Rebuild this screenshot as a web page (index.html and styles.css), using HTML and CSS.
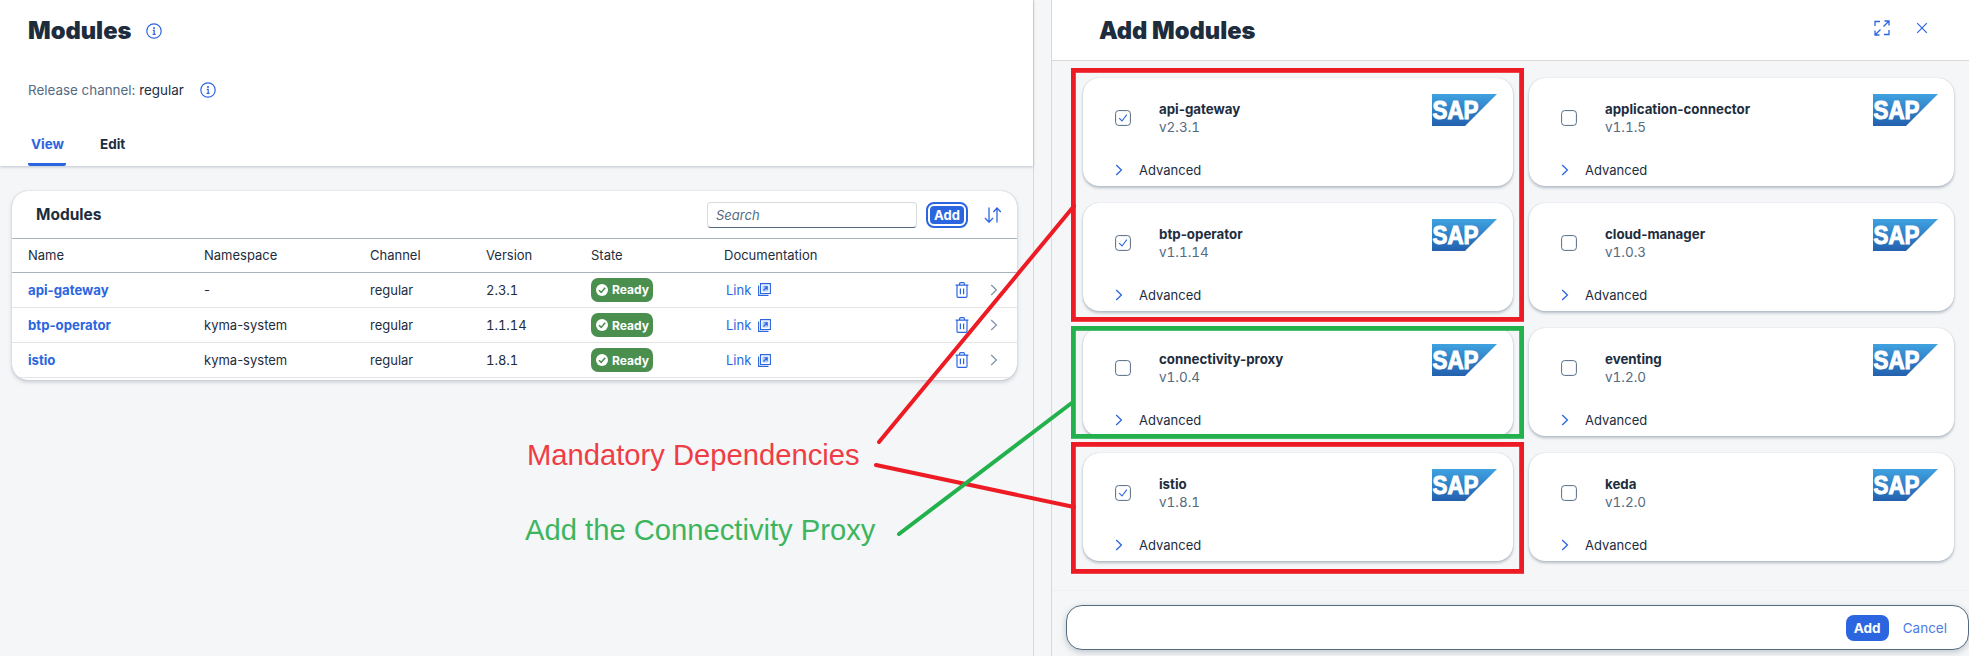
FILE: index.html
```html
<!DOCTYPE html>
<html lang="en">
<head>
<meta charset="utf-8">
<title>Modules</title>
<link rel="stylesheet" href="styles.css">
</head>
<body>
<svg class="defs" width="0" height="0" aria-hidden="true">
  <defs>
    <linearGradient id="sapg" x1="0" y1="0" x2="0" y2="1">
      <stop offset="0" stop-color="#3fa2e0"/>
      <stop offset="1" stop-color="#2360ae"/>
    </linearGradient>
    <symbol id="i-info" viewBox="0 0 16 16">
      <circle cx="8" cy="8" r="7.2" fill="none" stroke="currentColor" stroke-width="1.2"/>
      <circle cx="8" cy="5" r="1" fill="currentColor"/>
      <path d="M6.8 7.4H8.2V11.4M6.6 11.4H9.6" fill="none" stroke="currentColor" stroke-width="1.2"/>
    </symbol>
    <symbol id="i-ext" viewBox="0 0 13 13">
      <path d="M2.5.6H12.4V10.5H2.5Z M.6 2.5V12.4H10.5" fill="none" stroke="currentColor" stroke-width="1.1"/>
      <path d="M4.4 2.6H10.4V8.6H4.4Z" fill="currentColor" opacity=".35"/>
      <path d="M5.5 7.5L9 4M6.3 3.8H9.2V6.7" fill="none" stroke="currentColor" stroke-width="1.1"/>
    </symbol>
    <symbol id="i-trash" viewBox="0 0 14 16">
      <path d="M.6 3.2H13.4M2 3.2V14.2Q2 15.3 3.1 15.3H10.9Q12 15.3 12 14.2V3.2M4.6 3.2V1.8Q4.6.7 5.7.7H8.3Q9.4.7 9.4 1.8V3.2M5.4 6.4V12.2M8.6 6.4V12.2" fill="none" stroke="currentColor" stroke-width="1.2"/>
    </symbol>
    <symbol id="i-chev" viewBox="0 0 8 12">
      <path d="M1.2 1L6.4 6L1.2 11" fill="none" stroke="currentColor" stroke-width="1.3"/>
    </symbol>
    <symbol id="i-sort" viewBox="0 0 18 16">
      <path d="M5 .6V15M1 11L5 15.2L9 11M13 15.4V1M9.4 5L13 1L16.8 5" fill="none" stroke="currentColor" stroke-width="1.3"/>
    </symbol>
    <symbol id="i-expand" viewBox="0 0 16 16">
      <path d="M1 6V1.5H6M15 10V14.5H10M9.5 6.5L15 1M10.5 1H15V5.5M1 15L6.5 9.5M1 10.5V15H5.5" fill="none" stroke="currentColor" stroke-width="1.3"/>
    </symbol>
    <symbol id="i-close" viewBox="0 0 12 12">
      <path d="M1.2 1.2L10.8 10.8M10.8 1.2L1.2 10.8" fill="none" stroke="currentColor" stroke-width="1.2"/>
    </symbol>
    <symbol id="i-check" viewBox="0 0 16 16">
      <rect x=".6" y=".6" width="14.8" height="14.8" rx="3" fill="#fff" stroke="#556b82" stroke-width="1"/>
    </symbol>
    <symbol id="i-logo" viewBox="0 0 65 32">
      <polygon points="0,0 65,0 33,32 0,32" fill="url(#sapg)"/>
      <text x="0.5" y="25" class="logo-text" textLength="46" lengthAdjust="spacingAndGlyphs">SAP</text>
    </symbol>
  </defs>
</svg>

<div class="page">
  <main class="left">
    <header class="page-head">
      <div class="title-row">
        <h1 class="title">Modules</h1>
        <svg class="icon-16 blue"><use href="#i-info"/></svg>
      </div>
      <div class="channel-row">
        <span class="muted">Release channel:</span>&nbsp;<span>regular</span>
        <svg class="icon-16 blue channel-info"><use href="#i-info"/></svg>
      </div>
      <nav class="tabs">
        <span class="tab active">View</span>
        <span class="tab">Edit</span>
      </nav>
    </header>

    <section class="card">
      <div class="toolbar">
        <h2 class="card-title">Modules</h2>
        <div class="search">Search</div>
        <button class="btn-focus">Add</button>
        <svg class="sort blue"><use href="#i-sort"/></svg>
      </div>
      <table class="table">
        <thead>
          <tr>
            <th class="c-name">Name</th>
            <th class="c-ns">Namespace</th>
            <th class="c-ch">Channel</th>
            <th class="c-ver">Version</th>
            <th class="c-state">State</th>
            <th class="c-doc">Documentation</th>
            <th></th>
          </tr>
        </thead>
        <tbody>
          <tr>
            <td><a class="name-link">api-gateway</a></td><td>-</td><td>regular</td><td class="num">2.3.1</td>
            <td><span class="badge"><span class="badge-dot"><svg class="badge-tick" viewBox="0 0 12 12"><path d="M3 6.2L5.2 8.4L9.2 3.8"/></svg></span>Ready</span></td>
            <td><a class="doc-link">Link<svg class="icon-13"><use href="#i-ext"/></svg></a></td>
            <td class="actions"><svg class="icon-trash blue"><use href="#i-trash"/></svg><svg class="icon-chev gray"><use href="#i-chev"/></svg></td>
          </tr>
          <tr>
            <td><a class="name-link">btp-operator</a></td><td>kyma-system</td><td>regular</td><td class="num">1.1.14</td>
            <td><span class="badge"><span class="badge-dot"><svg class="badge-tick" viewBox="0 0 12 12"><path d="M3 6.2L5.2 8.4L9.2 3.8"/></svg></span>Ready</span></td>
            <td><a class="doc-link">Link<svg class="icon-13"><use href="#i-ext"/></svg></a></td>
            <td class="actions"><svg class="icon-trash blue"><use href="#i-trash"/></svg><svg class="icon-chev gray"><use href="#i-chev"/></svg></td>
          </tr>
          <tr>
            <td><a class="name-link">istio</a></td><td>kyma-system</td><td>regular</td><td class="num">1.8.1</td>
            <td><span class="badge"><span class="badge-dot"><svg class="badge-tick" viewBox="0 0 12 12"><path d="M3 6.2L5.2 8.4L9.2 3.8"/></svg></span>Ready</span></td>
            <td><a class="doc-link">Link<svg class="icon-13"><use href="#i-ext"/></svg></a></td>
            <td class="actions"><svg class="icon-trash blue"><use href="#i-trash"/></svg><svg class="icon-chev gray"><use href="#i-chev"/></svg></td>
          </tr>
        </tbody>
      </table>
    </section>
  </main>

  <aside class="right">
    <header class="drawer-head">
      <h1 class="title">Add Modules</h1>
      <div class="drawer-actions">
        <svg class="icon-16 blue"><use href="#i-expand"/></svg>
        <svg class="icon-close blue"><use href="#i-close"/></svg>
      </div>
    </header>

    <div class="grid">
      <article class="mod">
        <div class="mod-main">
          <span class="check"><svg class="check-box"><use href="#i-check"/></svg><svg class="check-tick" viewBox="0 0 10 10"><path d="M1.2 5.2L4 8L8.8 1.6"/></svg></span>
          <div class="mod-text"><div class="mod-name">api-gateway</div><div class="mod-ver">v2.3.1</div></div>
          <svg class="logo"><use href="#i-logo"/></svg>
        </div>
        <div class="adv"><svg class="adv-chev blue"><use href="#i-chev"/></svg>Advanced</div>
      </article>
      <article class="mod">
        <div class="mod-main">
          <span class="check"><svg class="check-box"><use href="#i-check"/></svg></span>
          <div class="mod-text"><div class="mod-name">application-connector</div><div class="mod-ver">v1.1.5</div></div>
          <svg class="logo"><use href="#i-logo"/></svg>
        </div>
        <div class="adv"><svg class="adv-chev blue"><use href="#i-chev"/></svg>Advanced</div>
      </article>
      <article class="mod">
        <div class="mod-main">
          <span class="check"><svg class="check-box"><use href="#i-check"/></svg><svg class="check-tick" viewBox="0 0 10 10"><path d="M1.2 5.2L4 8L8.8 1.6"/></svg></span>
          <div class="mod-text"><div class="mod-name">btp-operator</div><div class="mod-ver">v1.1.14</div></div>
          <svg class="logo"><use href="#i-logo"/></svg>
        </div>
        <div class="adv"><svg class="adv-chev blue"><use href="#i-chev"/></svg>Advanced</div>
      </article>
      <article class="mod">
        <div class="mod-main">
          <span class="check"><svg class="check-box"><use href="#i-check"/></svg></span>
          <div class="mod-text"><div class="mod-name">cloud-manager</div><div class="mod-ver">v1.0.3</div></div>
          <svg class="logo"><use href="#i-logo"/></svg>
        </div>
        <div class="adv"><svg class="adv-chev blue"><use href="#i-chev"/></svg>Advanced</div>
      </article>
      <article class="mod">
        <div class="mod-main">
          <span class="check"><svg class="check-box"><use href="#i-check"/></svg></span>
          <div class="mod-text"><div class="mod-name">connectivity-proxy</div><div class="mod-ver">v1.0.4</div></div>
          <svg class="logo"><use href="#i-logo"/></svg>
        </div>
        <div class="adv"><svg class="adv-chev blue"><use href="#i-chev"/></svg>Advanced</div>
      </article>
      <article class="mod">
        <div class="mod-main">
          <span class="check"><svg class="check-box"><use href="#i-check"/></svg></span>
          <div class="mod-text"><div class="mod-name">eventing</div><div class="mod-ver">v1.2.0</div></div>
          <svg class="logo"><use href="#i-logo"/></svg>
        </div>
        <div class="adv"><svg class="adv-chev blue"><use href="#i-chev"/></svg>Advanced</div>
      </article>
      <article class="mod">
        <div class="mod-main">
          <span class="check"><svg class="check-box"><use href="#i-check"/></svg><svg class="check-tick" viewBox="0 0 10 10"><path d="M1.2 5.2L4 8L8.8 1.6"/></svg></span>
          <div class="mod-text"><div class="mod-name">istio</div><div class="mod-ver">v1.8.1</div></div>
          <svg class="logo"><use href="#i-logo"/></svg>
        </div>
        <div class="adv"><svg class="adv-chev blue"><use href="#i-chev"/></svg>Advanced</div>
      </article>
      <article class="mod">
        <div class="mod-main">
          <span class="check"><svg class="check-box"><use href="#i-check"/></svg></span>
          <div class="mod-text"><div class="mod-name">keda</div><div class="mod-ver">v1.2.0</div></div>
          <svg class="logo"><use href="#i-logo"/></svg>
        </div>
        <div class="adv"><svg class="adv-chev blue"><use href="#i-chev"/></svg>Advanced</div>
      </article>
    </div>

    <footer class="drawer-foot">
      <div class="foot-bar">
        <button class="btn-add">Add</button>
        <button class="btn-cancel">Cancel</button>
      </div>
    </footer>
  </aside>
</div>

<svg class="overlay" viewBox="0 0 1969 656" aria-hidden="true">
  <rect class="mark red" x="1073.4" y="70.4" width="448.2" height="249"/>
  <rect class="mark green" x="1073.4" y="328.4" width="448.2" height="108"/>
  <rect class="mark red" x="1073.4" y="444.4" width="448.2" height="127"/>
  <line class="stroke red" x1="879" y1="442" x2="1074" y2="206"/>
  <line class="stroke red" x1="876" y1="465" x2="1074" y2="507"/>
  <line class="stroke green" x1="899" y1="534" x2="1073" y2="402"/>
</svg>
<div class="note note-red">Mandatory Dependencies</div>
<div class="note note-green">Add the Connectivity Proxy</div>
</body>
</html>
```
FILE: styles.css
```css
* { box-sizing: border-box; }
html, body { margin: 0; padding: 0; }
body {
  width: 1969px;
  height: 656px;
  overflow: hidden;
  position: relative;
  font-family: Inter, "Liberation Sans", sans-serif;
  font-size: 13px;
  color: #1d2d3e;
  background: #f5f6f7;
}
.defs { position: absolute; }
.blue { color: #2b66e0; }
.gray { color: #8396a8; }
.muted { color: #556b82; }
.num { font-variant-numeric: tabular-nums; }

.page { display: flex; height: 656px; }
.left { width: 1034px; height: 656px; border-right: 1px solid #d9d9d9; flex: none; }
.right {
  width: 918px;
  margin-left: 17px;
  height: 656px;
  flex: none;
  border-left: 1px solid #d9d9d9;
  display: flex;
  flex-direction: column;
}

.title { margin: 0; font-size: 23.7px; font-weight: 900; line-height: 28px; }
.icon-16 { width: 16px; height: 16px; flex: none; }

.page-head {
  height: 166px;
  background: #fff;
  padding: 17px 0 0 28px;
  box-shadow: 0 1px 3px rgba(85, 107, 130, .35);
  position: relative;
}
.title-row { display: flex; align-items: center; gap: 15px; height: 28px; }
.channel-row { display: flex; align-items: center; margin-top: 35px; height: 20px; font-size: 13.4px; }
.channel-info { margin-left: 16px; }
.tabs { display: flex; margin-top: 33px; height: 33px; gap: 31px; }
.tab { font-weight: 700; font-size: 13.5px; padding: 0 3px; width: 38px; line-height: 22px; position: relative; height: 33px; }
.tab.active { color: #2b66e0; border-bottom: 3px solid #2b66e0; border-radius: 0 0 2px 2px; }

.card {
  margin: 25px 16px 0 12px;
  height: 189px;
  width: 1005px;
  background: #fff;
  border-radius: 16px;
  box-shadow: 0 0 1px rgba(85, 107, 130, .5), 0 2px 4px rgba(85, 107, 130, .3);
  overflow: hidden;
}
.toolbar {
  height: 48px;
  display: flex;
  align-items: center;
  padding: 0 15px 0 24px;
  border-bottom: 1px solid #a9b4be;
}
.card-title { margin: 0; font-size: 15.5px; font-weight: 700; flex: 1; }
.search {
  width: 210px;
  height: 26px;
  border: 1px solid #d5dadd;
  border-bottom: 1px solid #556b82;
  border-radius: 4px;
  font-style: italic;
  color: #556b82;
  padding-left: 8px;
  line-height: 24px;
  font-size: 13px;
}
.btn-focus {
  margin: 0 20px 0 13px;
  width: 34px;
  height: 18px;
  padding: 0;
  border: 0;
  background: #2b66e0;
  color: #fff;
  font: 700 13px/18px Inter, "Liberation Sans", sans-serif;
  border-radius: 4px;
  outline: 2px solid #2b66e0;
  outline-offset: 2px;
}
.sort { width: 18px; height: 16px; flex: none; }

.table { width: 100%; border-collapse: collapse; table-layout: fixed; }
.table th {
  height: 33px;
  text-align: left;
  font-weight: 400;
  padding: 0;
  border-bottom: 1px solid #a9b4be;
}
.table td { height: 35px; padding: 0; border-bottom: 1px solid #e5e5e5; }
.c-name { width: 192px; }
.c-ns { width: 166px; }
.c-ch { width: 116px; }
.c-ver { width: 105px; }
.c-state { width: 133px; }
.c-doc { width: 220px; }
.table th:first-child, .table td:first-child { padding-left: 16px; }
.name-link { color: #2b66e0; font-weight: 700; font-size: 13.2px; }
.badge {
  display: inline-flex;
  align-items: center;
  width: 62px;
  height: 24px;
  border-radius: 7px;
  background: #4b8f4f;
  color: #fff;
  font-size: 12px;
  font-weight: 700;
  padding-left: 5px;
  gap: 4px;
  vertical-align: middle;
}
.badge-dot {
  width: 12px;
  height: 12px;
  border-radius: 50%;
  background: #fff;
  flex: none;
  display: flex;
}
.badge-tick { width: 12px; height: 12px; }
.badge-tick path { fill: none; stroke: #4b8f4f; stroke-width: 1.6; }
.doc-link { color: #2b66e0; display: inline-flex; align-items: center; gap: 7px; margin-left: 2px; }
.icon-13 { width: 13px; height: 13px; }
.actions { display: flex; align-items: center; padding-left: 2px !important; }
.icon-trash { width: 14px; height: 16px; flex: none; margin-left: 9px; }
.icon-chev { width: 8px; height: 12px; flex: none; }
.actions .icon-chev { margin-left: 21px; }

.drawer-head {
  height: 61px;
  flex: none;
  background: #fff;
  border-bottom: 1px solid #d9d9d9;
  display: flex;
  align-items: center;
  justify-content: space-between;
  padding: 1px 41px 0 47px;
}
.drawer-actions { display: flex; align-items: center; gap: 26px; margin-top: -6px; }
.icon-close { width: 12px; height: 12px; }

.grid {
  display: grid;
  grid-template-columns: 430px 425px;
  grid-auto-rows: 108px;
  column-gap: 16px;
  row-gap: 17px;
  padding: 17px 0 0 31px;
}
.mod {
  background: #fff;
  border-radius: 16px;
  box-shadow: 0 0 1px rgba(85, 107, 130, .4), 0 2px 3px rgba(85, 107, 130, .4);
  display: flex;
  flex-direction: column;
  padding: 16px 16px 0 32px;
  height: 108px;
}
.mod-main { display: flex; height: 58px; position: relative; }
.check { width: 16px; height: 16px; position: relative; margin-top: 16px; flex: none; }
.check-box { width: 16px; height: 16px; display: block; }
.check-tick { position: absolute; left: 3px; top: 3px; width: 10px; height: 10px; }
.check-tick path { fill: none; stroke: #2b66e0; stroke-width: 1.1; }
.mod-text { margin-left: 28px; flex: 1; }
.mod-name { font-weight: 700; font-size: 13.3px; line-height: 18px; margin-top: 6px; }
.mod-ver { color: #556b82; font-size: 13.5px; line-height: 18px; font-variant-numeric: tabular-nums; }
.logo { width: 65px; height: 32px; flex: none; }
.logo-text {
  font-family: "Liberation Sans", sans-serif;
  font-weight: 700;
  font-size: 26px;
  fill: #fff;
  stroke: #fff;
  stroke-width: 1.1px;
}
.adv { display: flex; align-items: center; margin-top: 8px; height: 20px; }
.adv-chev { width: 8px; height: 12px; margin-right: 16px; }

.drawer-foot {
  margin-top: 29px;
  padding: 14px 0 0 14px;
  border-top: 1px solid #f0f1f2;
  flex: 1;
}
.foot-bar {
  width: 903px;
  height: 45px;
  background: #fff;
  border: 1px solid #556b82;
  border-radius: 16px;
  box-shadow: 0 2px 6px rgba(85, 107, 130, .35);
  display: flex;
  align-items: center;
  justify-content: flex-end;
  padding-right: 21px;
}
.btn-add {
  width: 43px;
  height: 26px;
  border: 0;
  padding: 0;
  border-radius: 8px;
  background: #2b66e0;
  color: #fff;
  font: 700 13.5px Inter, "Liberation Sans", sans-serif;
}
.btn-cancel {
  margin-left: 14px;
  border: 0;
  padding: 0;
  background: none;
  color: #4a7de6;
  font: 400 13.5px Inter, "Liberation Sans", sans-serif;
}

.overlay { position: absolute; left: 0; top: 0; width: 1969px; height: 656px; pointer-events: none; }
.mark { fill: none; stroke-width: 4.8; }
.mark.red { stroke: #ed1c24; }
.mark.green { stroke: #22b14c; }
.stroke { stroke-width: 4; stroke-linecap: round; }
.stroke.red { stroke: #ed1c24; }
.stroke.green { stroke: #22b14c; }
.note {
  position: absolute;
  font-family: "Liberation Sans", Arial, sans-serif;
  font-size: 29.2px;
  line-height: 32px;
  white-space: nowrap;
}
.note-red { left: 527px; top: 439px; color: #ee3d45; }
.note-green { left: 525px; top: 514px; color: #3cb55e; }
```
